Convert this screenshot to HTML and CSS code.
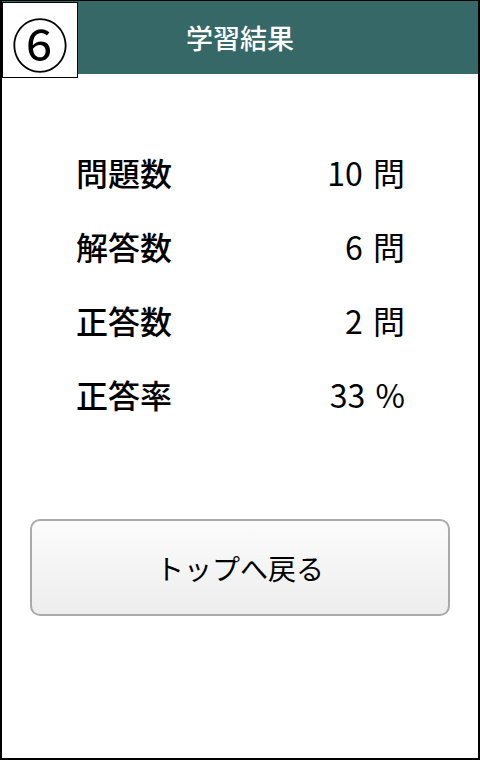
FILE: index.html
```html
<!DOCTYPE html>
<html lang="ja">
<head>
    <meta charset="UTF-8">
    <meta name="viewport" content="width=device-width, initial-scale=1.0">
    <title>学習結果</title>
    <link rel="stylesheet" href="styles.css">
</head>
<body>
    <div class="screen">
        <!-- 画面番号 -->
        <div class="screen-no">⑥</div>

        <header class="title-bar">学習結果</header>

        <!-- 結果一覧 -->
        <div class="result-list">
            <div class="result-row">
                <span class="result-label">問題数</span>
                <span class="result-value">10 問</span>
            </div>
            <div class="result-row">
                <span class="result-label">解答数</span>
                <span class="result-value">6 問</span>
            </div>
            <div class="result-row">
                <span class="result-label">正答数</span>
                <span class="result-value">2 問</span>
            </div>
            <div class="result-row">
                <span class="result-label">正答率</span>
                <span class="result-value">33 %</span>
            </div>
        </div>

        <div class="actions">
            <button class="top-btn" type="button">トップへ戻る</button>
        </div>
    </div>
</body>
</html>
```

FILE: styles.css
```css
* {
    margin: 0;
    padding: 0;
    box-sizing: border-box;
}

body {
    background: #fff;
    font-family: "Noto Sans CJK JP", "Noto Sans", sans-serif;
    color: #000;
}

.screen {
    position: relative;
    width: 480px;
    height: 760px;
    border: 2px solid #000;
    border-top-width: 1px;
    background: #fff;
}

/* 左上の番号 */
.screen-no {
    position: absolute;
    top: 1px;
    left: 0;
    width: 76px;
    height: 76px;
    padding-top: 5px;
    border: 1px solid #000;
    background: #fff;
    display: flex;
    justify-content: center;
    align-items: center;
    font-size: 57px;
    line-height: 1;
    z-index: 2;
}

.title-bar {
    height: 73px;
    background: #356866;
    color: #fff;
    font-size: 27px;
    font-weight: 500;
    display: flex;
    justify-content: center;
    align-items: center;
}

.result-list {
    padding: 61px 73px 0 74px;
}

.result-row {
    height: 74px;
    display: flex;
    justify-content: space-between;
    align-items: center;
    font-size: 32px;
}

.result-label {
    font-weight: 500;
}

.result-value {
    font-weight: 400;
    word-spacing: 3px;
}

.actions {
    padding: 88px 28px 0;
}

.top-btn {
    width: 100%;
    height: 97px;
    border: 2px solid #aaa;
    border-radius: 10px;
    background: linear-gradient(to bottom, #fcfcfc 0%, #ededed 100%);
    font-family: inherit;
    font-size: 28px;
    color: #000;
    cursor: pointer;
}
```
